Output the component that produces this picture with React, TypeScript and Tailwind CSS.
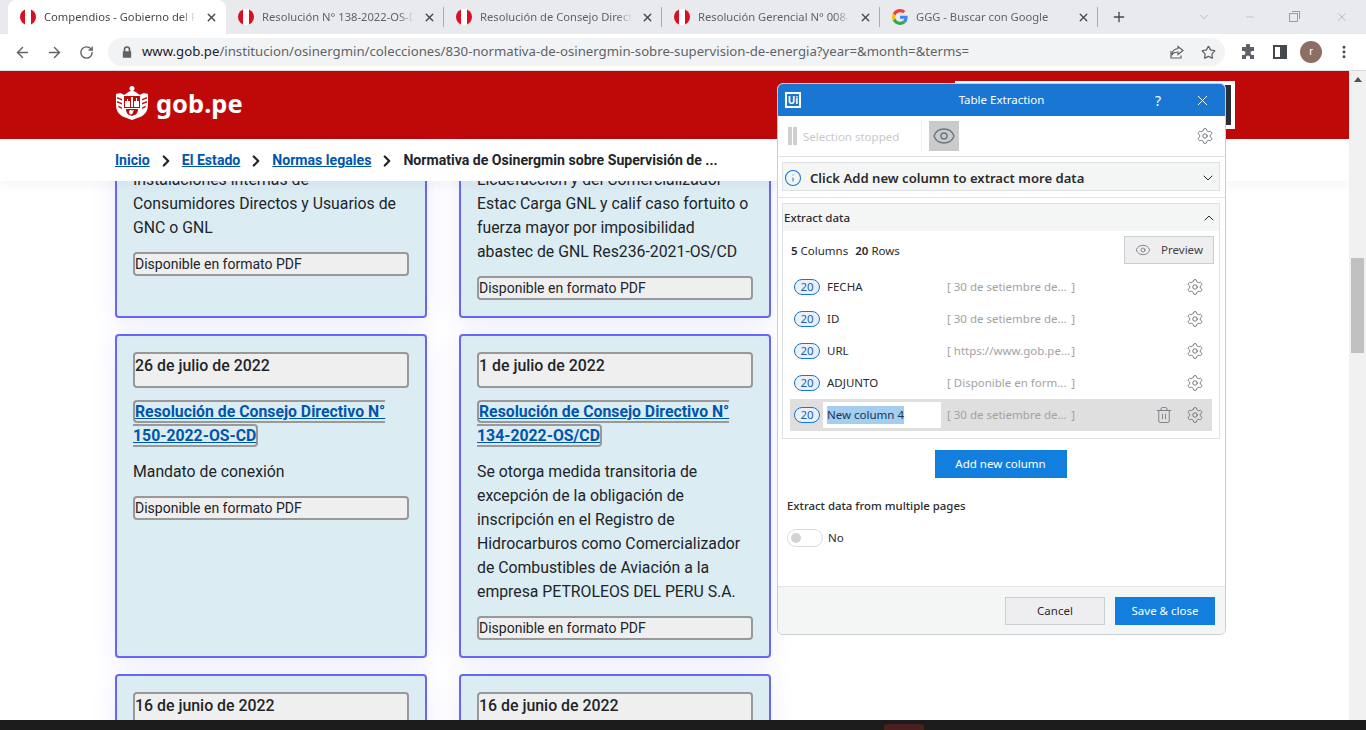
import { ArrowLeft, ArrowRight, ChevronDown, ChevronRight, ChevronUp, Eye, Info, Minus, MoreVertical, Plus, RotateCw, Settings, Star, Trash2, X } from "lucide-react";

const tabs = [
  { title: "Compendios - Gobierno del P", active: true },
  { title: "Resolución N° 138-2022-OS-D" },
  { title: "Resolución de Consejo Direct" },
  { title: "Resolución Gerencial N° 008-" },
  { title: "GGG - Buscar con Google", google: true },
];

const columns = [
  { name: "FECHA", sample: "30 de setiembre de..." },
  { name: "ID", sample: "30 de setiembre de..." },
  { name: "URL", sample: "https://www.gob.pe..." },
  { name: "ADJUNTO", sample: "Disponible en form..." },
];

function PeruFlag() {
  return (
    <span className="flex h-4 w-4 shrink-0 overflow-hidden rounded-full">
      <span className="w-[5px] bg-[#d91023]"></span>
      <span className="w-[6px] bg-white"></span>
      <span className="w-[5px] bg-[#d91023]"></span>
    </span>
  );
}

function GoogleIcon() {
  return (
    <svg viewBox="0 0 48 48" className="h-4 w-4 shrink-0">
      <path fill="#EA4335" d="M24 9.5c3.5 0 6.700 1.200 9.200 3.600l6.900-6.900C35.900 2.400 30.500 0 24 0 14.600 0 6.500 5.400 2.600 13.200l8 6.200C12.500 13.600 17.800 9.500 24 9.500z" />
      <path fill="#4285F4" d="M46.900 24.500c0-1.600-.1-3.100-.4-4.500H24v9h12.900c-.6 3-2.200 5.500-4.700 7.200l7.700 6c4.500-4.200 7-10.300 7-17.700z" />
      <path fill="#FBBC05" d="M10.600 28.600c-.5-1.400-.8-3-.8-4.600s.3-3.200.8-4.600l-8-6.200C.9 16.500 0 20.100 0 24s.9 7.500 2.600 10.800l8-6.200z" />
      <path fill="#34A853" d="M24 48c6.500 0 11.900-2.100 15.900-5.800l-7.700-6c-2.200 1.400-4.900 2.300-8.200 2.300-6.200 0-11.500-4.100-13.400-9.900l-8 6.200C6.500 42.600 14.600 48 24 48z" />
    </svg>
  );
}

function GobLogo() {
  return (
    <svg viewBox="0 0 32 34" className="h-[34px] w-[32px]">
      <path fill="#fff" d="M0 8c3-1 6-1 8 1l3-2c1-1 2-2 5-2s4 1 5 2l3 2c2-2 5-2 8-1v10c0 7-3 11-8 13-3 1-5 2-8 3-3-1-5-2-8-3-5-2-8-6-8-13z" />
      <circle cx="16" cy="2.500" r="2.500" fill="#fff" />
      <path fill="#bf0909" d="M8 10h16v12H8z" />
      <path fill="#fff" d="M9 15h2v-2h1v2h2v6H9zM18 15h2v-3h1v3h2v6h-5zM15 11h2v10h-2z" />
      <path fill="#bf0909" d="M10 23h12c0 4-2 6-6 7-4-1-6-3-6-7zM1 11l5 2v1.500l-5-2zM1 15l5 2v1.500l-5-2zM2 19.500l4 2V23l-3.500-1.800zM31 11l-5 2v1.500l5-2zM31 15l-5 2v1.500l5-2zM30 19.500l-4 2V23l3.500-1.800z" />
      <path fill="#fff" d="M13 26c0-2 2-2.500 3-1.500l2-.5-1 2c0 1.500-1 2.500-2 2.500s-2-1-2-2.500z" />
    </svg>
  );
}

function PdfBox() {
  return (
    <div className="mt-3 h-6 rounded border-2 border-[#999] bg-[#efefef] text-[14px] leading-5 text-[#212529]">
      Disponible en formato PDF
    </div>
  );
}

function DateBox({ date }: { date: string }) {
  return (
    <div className="h-9 rounded border-2 border-[#999] bg-[#efefef] text-[15.9px] font-medium leading-6 text-[#212529]">
      {date}
    </div>
  );
}

function ResLink({ text }: { text: string }) {
  return (
    <div className="mt-3 text-[15.8px] font-bold leading-6">
      <a className="rounded border-2 border-[#999] text-[#0056ac] underline">{text}</a>
    </div>
  );
}

function Card({ children }: { children: React.ReactNode }) {
  return (
    <div className="rounded border-2 border-[#6767f5] bg-[#dcecf3] p-4 text-[15.8px] leading-6 text-[#212529] shadow-[0_4px_24px_rgba(100,100,255,0.12)]">
      {children}
    </div>
  );
}

function ExtractionDialog() {
  return (
    <div className="absolute left-[777px] top-[83px] z-20 flex h-[552px] w-[449px] flex-col overflow-hidden rounded-md border border-[#c9ced3] bg-white font-['Noto_Sans',sans-serif] text-[11.5px] text-[#2b2b2b]">
      <div className="relative flex h-8 shrink-0 items-center justify-center bg-[#1976d2] text-white">
        <span className="absolute left-[7px] flex h-4 w-4 items-center justify-center border-2 border-white text-[10px] font-bold leading-none">Ui</span>
        <span className="text-[11.5px]">Table Extraction</span>
        <span className="absolute left-[377px] text-[14px]">?</span>
        <X className="absolute left-[416px] h-[17px] w-[17px]" strokeWidth={1.4} />
      </div>

      <div className="flex h-[41px] shrink-0 items-center border-b border-[#e1e3e5] pl-[10px] pr-[11px]">
        <span className="flex gap-[1px]">
          <span className="h-[18px] w-1 bg-[#cfcfcf]"></span>
          <span className="h-[18px] w-1 bg-[#cfcfcf]"></span>
        </span>
        <span className="ml-[6px] pt-[2px] text-[#c9c9c9]">Selection stopped</span>
        <span className="ml-[22px] h-[32px] w-px bg-[#f0f0f0]"></span>
        <span className="ml-[7px] flex h-[30px] w-[30px] items-center justify-center bg-[#cbcbcb] text-[#6d757c]">
          <Eye className="h-6 w-6" strokeWidth={1.4} />
        </span>
        <Settings className="ml-auto h-[18px] w-[18px] text-[#6d757c]" strokeWidth={1.3} />
      </div>

      <div className="ml-1 mr-[5px] mt-[5px] flex h-[29px] shrink-0 items-center border border-[#dfe2e4] bg-[#f4f6f6] pl-[1px] pr-[3px] pt-[3px]">
        <Info className="h-[18px] w-[18px] text-[#1976d2]" strokeWidth={1.4} />
        <span className="ml-[8px] pt-px text-[13.1px] font-semibold">Click Add new column to extract more data</span>
        <ChevronDown className="ml-auto h-[16px] w-[16px]" strokeWidth={1.5} />
      </div>
      <div className="mt-[6px] h-px shrink-0 bg-[#e1e3e5]"></div>

      <div className="ml-1 mr-[5px] mt-[5px] h-[236px] shrink-0 border border-[#dfe2e4]">
        <div className="flex h-[27px] items-center bg-[#f4f6f6] pl-[1px] pr-[2px]">
          <span className="font-medium">Extract data</span>
          <ChevronUp className="ml-auto h-[16px] w-[16px]" strokeWidth={1.5} />
        </div>
        <div className="flex h-[40px] items-start pl-[8px] pr-[5px] pt-[5px]">
          <span className="mt-[6px]"><b className="font-semibold">5</b> Columns</span>
          <span className="ml-[7px] mt-[6px]"><b className="font-semibold">20</b> Rows</span>
          <span className="ml-auto flex h-7 w-[90px] items-center justify-center gap-[10px] border border-[#c9ced3] bg-[#eeeef0] text-[#444]">
            <Eye className="h-4 w-4 text-[#777]" strokeWidth={1.3} />
            Preview
          </span>
        </div>
        <div className="mx-[7px]">
          {columns.map((col) => (
            <ColumnRow key={col.name} name={col.name} sample={col.sample} />
          ))}
          <div className="flex h-8 items-center bg-[#dfdfdf]">
            <Badge />
            <span className="ml-[3px] flex h-[26px] w-[118px] items-center bg-white pl-1 text-[#12365a]">
              <span className="bg-[#a5cdf0]">New column 4</span>
            </span>
            <Sample text="30 de setiembre de..." left={6} />
            <Trash2 className="ml-auto h-[18px] w-[18px] text-[#737b82]" strokeWidth={1.2} />
            <Settings className="ml-[13px] mr-2 h-[18px] w-[18px] text-[#6d757c]" strokeWidth={1.3} />
          </div>
        </div>
      </div>

      <div className="mt-[11px] flex shrink-0 justify-center pr-[2px]">
        <span className="flex h-7 w-[132px] items-center justify-center bg-[#127fdf] text-white">Add new column</span>
      </div>
      <div className="ml-[9px] mt-[19px] shrink-0 text-[11.4px] font-medium">Extract data from multiple pages</div>
      <div className="ml-[9px] mt-[15px] flex shrink-0 items-center">
        <span className="flex h-[18px] w-9 items-center rounded-full border border-[#dcdcdc] pl-[3px]">
          <span className="h-[10px] w-[10px] rounded-full bg-[#d3d3d3]"></span>
        </span>
        <span className="ml-[5px]">No</span>
      </div>

      <div className="mt-auto flex h-[48px] shrink-0 items-center justify-end gap-[10px] border-t border-[#e4e6e8] bg-[#f4f6f6] pr-[10px] pt-px">
        <span className="flex h-7 w-[100px] items-center justify-center border border-[#c9ced3] bg-[#eeeef0]">Cancel</span>
        <span className="flex h-7 w-[100px] items-center justify-center bg-[#127fdf] text-white">Save &amp; close</span>
      </div>
    </div>
  );
}

function Badge() {
  return (
    <span className="ml-[4px] flex h-4 w-[26px] shrink-0 items-center justify-center rounded-full border border-[#1976d2] bg-[#e8f1fa] text-[11.5px] leading-none text-[#1b5fa8]">20</span>
  );
}

function Sample({ text, left }: { text: string; left: number }) {
  return (
    <span style={{ marginLeft: left }} className="flex w-[128px] justify-between whitespace-nowrap text-[#a2a2a2]">
      <span>[ {text}</span>
      <span>]</span>
    </span>
  );
}

function ColumnRow({ name, sample }: { name: string; sample: string }) {
  return (
    <div className="flex h-8 items-center">
      <Badge />
      <span className="ml-[7px] w-[120px]">{name}</span>
      <Sample text={sample} left={0} />
      <Settings className="ml-auto mr-2 h-[18px] w-[18px] text-[#6d757c]" strokeWidth={1.3} />
    </div>
  );
}

export default function App() {
  return (
    <div className="relative flex h-[730px] w-[1366px] flex-col overflow-hidden bg-white font-['Roboto',sans-serif]">
      {/* Tab strip */}
      <div className="flex h-[34px] shrink-0 items-stretch bg-[#e8eaed] pl-[8px] font-['Noto_Sans',sans-serif] text-[11.2px] text-[#5f6368]">
        {tabs.map((tab) => (
          <div key={tab.title} className={`flex w-[218px] shrink-0 items-center pl-[12px] ${tab.active ? "rounded-t-lg bg-white text-[#45494e]" : ""}`}>
            {tab.google ? <GoogleIcon /> : <PeruFlag />}
            <span className="ml-[8px] w-[152px] overflow-hidden whitespace-nowrap [mask-image:linear-gradient(to_right,black_90%,transparent)]">{tab.title}</span>
            <X className="ml-[9px] h-[13px] w-[13px] text-[#45494e]" strokeWidth={2.5} />
            {!tab.active && <span className="ml-[7px] h-5 w-px shrink-0 bg-[#a9adb2]"></span>}
          </div>
        ))}
        <Plus className="ml-[13px] mt-[9px] h-[16px] w-[16px] text-[#45494e]" strokeWidth={2} />
        <div className="ml-auto flex items-center text-[#9a9da1]">
          <ChevronDown className="mr-[33px] h-[14px] w-[14px]" strokeWidth={1} />
          <Minus className="mr-[33px] h-[12px] w-[12px]" strokeWidth={1} />
          <span className="relative mr-[37px] h-[9px] w-[9px] border border-[#9a9da1]">
            <span className="absolute -right-[3px] -top-[3px] h-[8px] w-[8px] border-r border-t border-[#9a9da1]"></span>
          </span>
          <X className="mr-[17px] h-[14px] w-[14px]" strokeWidth={1} />
        </div>
      </div>

      {/* Toolbar */}
      <div className="flex h-[37px] shrink-0 items-center border-b border-[#d9dadc] bg-white pl-[14px] text-[#5f6368]">
        <ArrowLeft className="h-[17px] w-[17px]" strokeWidth={2} />
        <ArrowRight className="ml-[15px] h-[17px] w-[17px]" strokeWidth={2} />
        <RotateCw className="ml-[16px] h-[15px] w-[15px]" strokeWidth={2.2} />
        <div className="ml-[14px] flex h-7 w-[1117px] items-center rounded-full bg-[#f1f3f4] pl-[14px] pr-[9px]">
          <svg viewBox="0 0 12 14" className="h-[12px] w-[10px] fill-[#5f6368]">
            <path d="M2 6V4a4 4 0 0 1 8 0v2h1v8H1V6zm2 0h4V4a2 2 0 0 0-4 0z" />
          </svg>
          <span className="ml-[10px] whitespace-nowrap font-['Noto_Sans',sans-serif] text-[13.2px] text-[#5f6368]">
            <span className="text-[#202124]">www.gob.pe</span>/institucion/osinergmin/colecciones/830-normativa-de-osinergmin-sobre-supervision-de-energia?year=&amp;month=&amp;terms=
          </span>
          <svg viewBox="0 0 16 16" className="ml-auto h-4 w-4 fill-none stroke-[#5f6368]" strokeWidth={1.2}>
            <path d="M9 2.500l5 4-5 4V8C6 8 4 9 3 11c0-3 2-6 6-6.500zM2 7v7h10v-2.500" />
          </svg>
          <Star className="ml-[16px] h-[15px] w-[15px]" strokeWidth={2} />
        </div>
        <svg viewBox="0 0 16 16" className="ml-[15px] h-4 w-4 fill-[#5f6368]">
          <path d="M6 1.500a2 2 0 0 1 4 0V3h4v4h-1.500a2 2 0 0 0 0 4H14v4h-4v-1.500a2 2 0 0 0-4 0V15H2v-4h1.500a2 2 0 0 0 0-4H2V3h4z" />
        </svg>
        <span className="ml-[17px] flex h-[14px] w-[14px] justify-end border-2 border-[#45494e]">
          <span className="w-[5px] bg-[#45494e]"></span>
        </span>
        <span className="ml-[13px] flex h-[22px] w-[22px] items-center justify-center rounded-full bg-[#8d6e63] text-[11px] text-white">r</span>
        <MoreVertical className="ml-[14px] h-[16px] w-[16px] text-[#45494e]" strokeWidth={2.4} />
      </div>

      {/* Page */}
      <div className="flex min-h-0 flex-1">
        <div className="min-w-0 flex-1 overflow-hidden">
          <div className="flex h-[68px] items-start justify-between bg-[#bf0909] pl-[116px] pr-[114px]">
            <div className="mt-[15px] flex items-center">
              <GobLogo />
              <span className="ml-[8px] font-['Noto_Sans',sans-serif] text-[25.5px] font-bold leading-[34px] text-white">gob.pe</span>
            </div>
            <div className="mt-[10px] flex h-[48px] w-[280px] justify-end border-4 border-white bg-white">
              <span className="w-[6px] bg-[#2b2f33]"></span>
            </div>
          </div>
          <div className="relative z-10 flex h-[42px] items-center bg-white pl-[115px] pt-px text-[14.1px] font-bold text-[#212529] shadow-[0_4px_10px_rgba(60,60,120,0.05)]">
            <a className="text-[#0056ac] underline">Inicio</a>
            <ChevronRight className="mx-[7px] h-[18px] w-[18px]" strokeWidth={3} />
            <a className="text-[#0056ac] underline">El Estado</a>
            <ChevronRight className="mx-[7px] h-[18px] w-[18px]" strokeWidth={3} />
            <a className="text-[#0056ac] underline">Normas legales</a>
            <ChevronRight className="mx-[7px] h-[18px] w-[18px]" strokeWidth={3} />
            <span>Normativa de Osinergmin sobre Supervisión de ...</span>
          </div>

          <div className="-mt-[32px] ml-[115px] grid w-[656px] grid-cols-2 gap-x-8 gap-y-4">
            <Card>
              <div className="pt-px">Instalaciones internas de Consumidores Directos y Usuarios de GNC o GNL</div>
              <PdfBox />
            </Card>
            <Card>
              <div className="pt-px">Licuefacción y del Comercializador Estac Carga GNL y calif caso fortuito o fuerza mayor por imposibilidad abastec de GNL Res236-2021-OS/CD</div>
              <PdfBox />
            </Card>
            <Card>
              <DateBox date="26 de julio de 2022" />
              <ResLink text="Resolución de Consejo Directivo N° 150-2022-OS-CD" />
              <div className="mt-3">Mandato de conexión</div>
              <PdfBox />
            </Card>
            <Card>
              <DateBox date="1 de julio de 2022" />
              <ResLink text="Resolución de Consejo Directivo N° 134-2022-OS/CD" />
              <div className="mt-3">Se otorga medida transitoria de excepción de la obligación de inscripción en el Registro de Hidrocarburos como Comercializador de Combustibles de Aviación a la empresa PETROLEOS DEL PERU S.A.</div>
              <PdfBox />
            </Card>
            <Card>
              <DateBox date="16 de junio de 2022" />
            </Card>
            <Card>
              <DateBox date="16 de junio de 2022" />
            </Card>
          </div>
        </div>

        {/* Scrollbar */}
        <div className="flex w-[17px] shrink-0 flex-col items-center bg-[#f1f1f1] pt-[6px]">
          <span className="h-0 w-0 border-x-[4px] border-b-[5px] border-x-transparent border-b-[#505050]"></span>
          <span className="mt-[176px] h-[95px] w-[13px] bg-[#c1c1c1]"></span>
        </div>
      </div>

      {/* Bottom bar */}
      <div className="h-[10px] shrink-0 bg-[#1c1c1c] pl-[884px] pt-[4px]">
        <div className="h-[6px] w-[40px] rounded-t bg-[#4a1f20]"></div>
      </div>

      <ExtractionDialog />
    </div>
  );
}
